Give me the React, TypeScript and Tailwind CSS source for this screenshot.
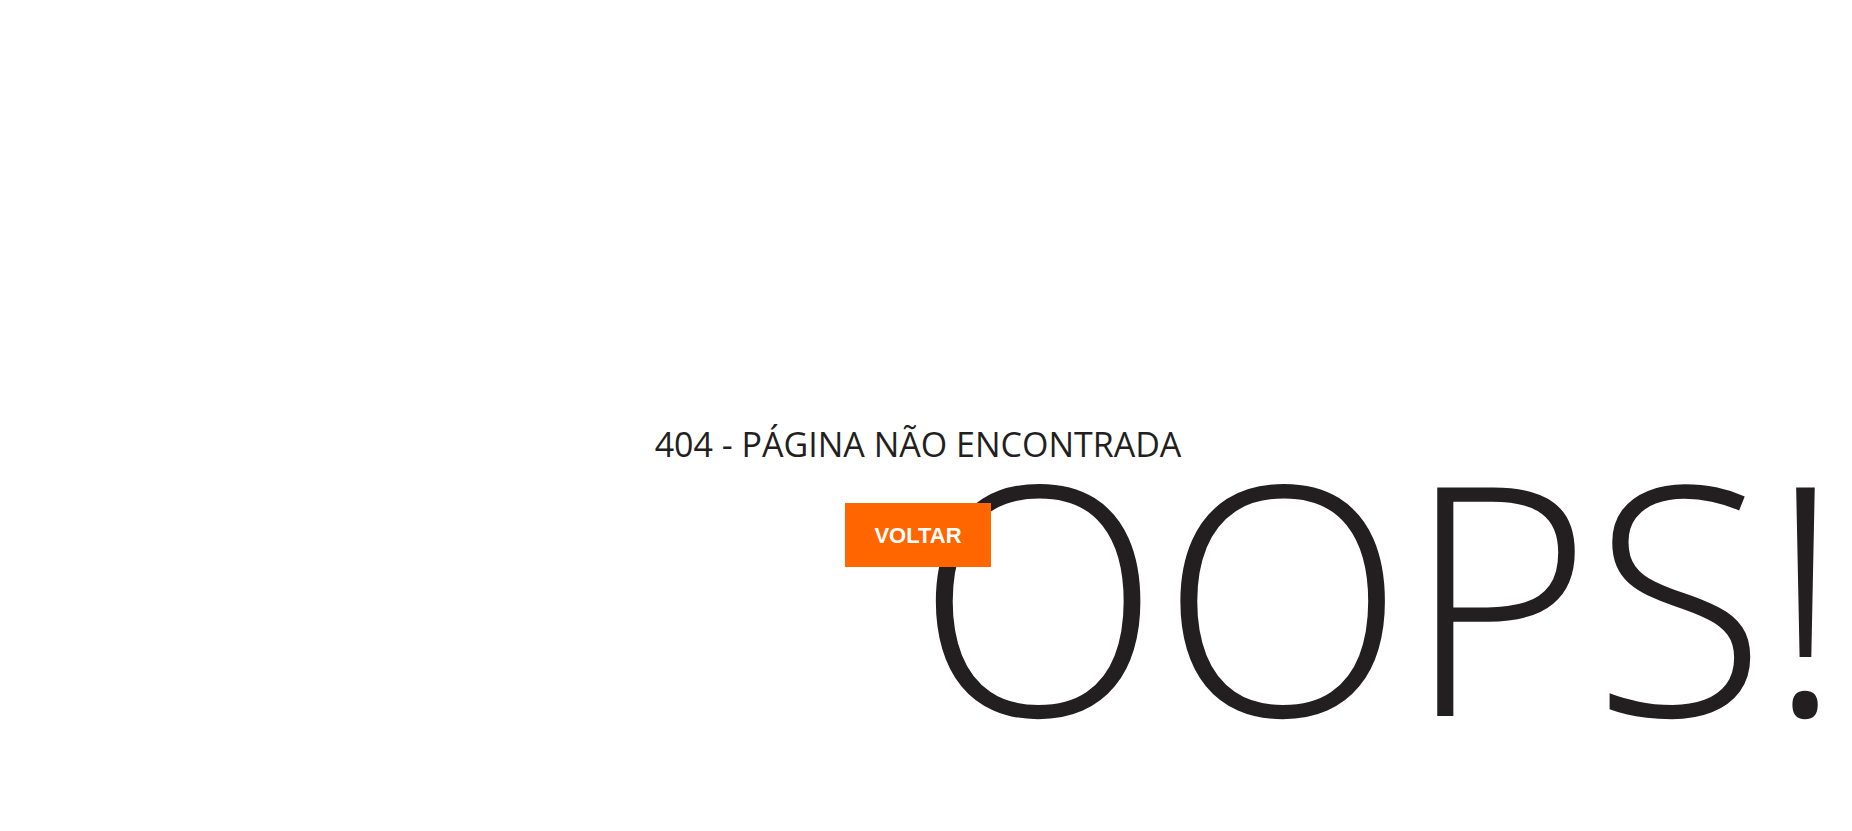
export default function App() {
  return (
    <main className="grid grid-cols-2 min-h-[831px] bg-white font-['Open_Sans',sans-serif] text-[#231f20]">
      {/* big decorative word, sits in the right half behind the button */}
      <div className="[grid-area:1/2] pt-[432px] -ml-[10px]">
        <p className="text-[320px] font-light leading-none select-none">OOPS!</p>
      </div>

      <section className="[grid-area:1/1/2/3] relative z-10 flex flex-col items-center pt-[424px] pr-4">
        <h1 className="text-[34px] leading-[40px] font-normal">404 - PÁGINA NÃO ENCONTRADA</h1>
        <a
          href="#"
          className="mt-[39px] flex h-16 w-[146px] items-center justify-center bg-[#ff6600] font-['Liberation_Sans',Arial,sans-serif] text-[22px] font-bold text-white"
        >
          VOLTAR
        </a>
      </section>
    </main>
  );
}
